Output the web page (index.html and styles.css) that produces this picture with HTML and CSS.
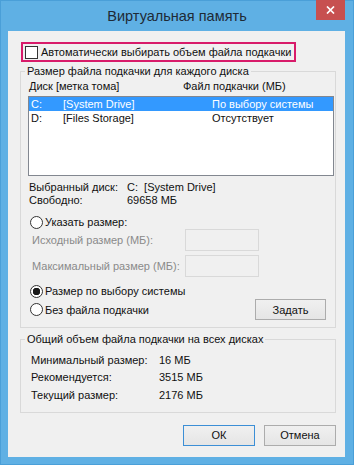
FILE: index.html
```html
<!DOCTYPE html>
<html lang="ru">
<head>
    <meta charset="UTF-8">
    <title>Виртуальная память</title>
    <link rel="stylesheet" href="styles.css">
</head>
<body>
<div class="window">
    <div class="titlebar">
        <span></span>
        <h1 class="title">Виртуальная память</h1>
        <button class="close" type="button">
            <svg width="9" height="8" viewBox="0 0 9 8"><path d="M1 0.5 L8 7.5 M8 0.5 L1 7.5" stroke="#fff" stroke-width="1.7" fill="none"/></svg>
        </button>
    </div>
    <div class="client">
        <label class="auto-box"><span class="checkbox"></span>Автоматически выбирать объем файла подкачки</label>

        <fieldset class="group">
            <legend>Размер файла подкачки для каждого диска</legend>
            <div class="list-head">
                <span>Диск [метка тома]</span>
                <span>Файл подкачки (МБ)</span>
            </div>
            <div class="listbox">
                <div class="list-row selected"><span>C:</span><span>[System Drive]</span><span>По выбору системы</span></div>
                <div class="list-row"><span>D:</span><span>[Files Storage]</span><span>Отсутствует</span></div>
            </div>
            <div class="info">
                <span>Выбранный диск:</span><span>C:&nbsp;&nbsp;[System Drive]</span>
                <span>Свободно:</span><span>69658 МБ</span>
            </div>
            <div class="radio-row first"><span class="radio"></span>Указать размер:</div>
            <div class="size-row"><span>Исходный размер (МБ):</span><span class="field"></span></div>
            <div class="size-row second"><span>Максимальный размер (МБ):</span><span class="field"></span></div>
            <div class="radio-row system"><span class="radio checked"></span>Размер по выбору системы</div>
            <div class="button-row">
                <div class="radio-row"><span class="radio"></span>Без файла подкачки</div>
                <button class="btn" type="button">Задать</button>
            </div>
        </fieldset>

        <fieldset class="group totals-group">
            <legend>Общий объем файла подкачки на всех дисках</legend>
            <div class="totals">
                <span>Минимальный размер:</span><span>16 МБ</span>
                <span>Рекомендуется:</span><span>3515 МБ</span>
                <span>Текущий размер:</span><span>2176 МБ</span>
            </div>
        </fieldset>

        <div class="dialog-buttons">
            <button class="btn default" type="button">ОК</button>
            <button class="btn" type="button">Отмена</button>
        </div>
    </div>
</div>
</body>
</html>
```

FILE: styles.css
```css
* {
    box-sizing: border-box;
}

body {
    margin: 0;
    background-color: #5fb0e4;
    font-family: "Liberation Sans", Arial, sans-serif;
    font-size: 11px;
    color: #111;
}

.window {
    height: 465px;
    display: flex;
    flex-direction: column;
    border: 1px solid #4a9fd8;
}

.titlebar {
    height: 30px;
    display: grid;
    grid-template-columns: 1fr auto 1fr;
    align-items: start;
}

.title {
    margin: 0;
    padding-top: 5px;
    font-size: 14.5px;
    font-weight: normal;
    line-height: 20px;
    color: #1e2a36;
}

.close {
    justify-self: end;
    width: 29px;
    height: 20px;
    margin-right: 8px;
    margin-top: -1px;
    padding: 0;
    border: none;
    background-color: #c75050;
    display: flex;
    align-items: center;
    justify-content: center;
}

.client {
    flex: 1;
    margin: 0 8px 7px 7px;
    background-color: #f0f0f0;
    display: flex;
    flex-direction: column;
}

.auto-box {
    margin: 11px 0 0 13px;
    width: 275px;
    height: 20px;
    border: 2px solid #d81b6a;
    display: flex;
    align-items: center;
    gap: 3px;
    padding-left: 2px;
}

.checkbox {
    width: 13px;
    height: 13px;
    border: 1px solid #333;
    background-color: #fff;
}

.group {
    margin: 2px 9px 0 12px;
    padding: 0 1px 7px 7px;
    border: 1px solid #d9d9d9;
    min-width: 0;
}

.group legend {
    padding: 0 2px;
    margin-left: -3px;
    line-height: 15px;
}

.list-head {
    display: grid;
    grid-template-columns: 154px 1fr;
    padding-left: 1px;
    line-height: 15px;
    margin-bottom: 2px;
}

.listbox {
    height: 80px;
    border: 1px solid #828790;
    background-color: #fff;
}

.list-row {
    height: 14px;
    line-height: 14px;
    display: grid;
    grid-template-columns: 32px 149px 1fr;
    padding-left: 2px;
}

.list-row.selected {
    background-color: #3399ff;
    color: #fff;
}

.info {
    margin-top: 5px;
    display: grid;
    grid-template-columns: 98px auto;
    line-height: 13px;
    padding-left: 1px;
}

.radio-row {
    display: flex;
    align-items: center;
    gap: 2px;
    padding-left: 2px;
    height: 14px;
}

.radio-row.first {
    margin-top: 8px;
}

.radio-row.system {
    margin-top: 7px;
}

.radio {
    width: 13px;
    height: 13px;
    border: 1px solid #333;
    border-radius: 50%;
    background-color: #fff;
}

.radio.checked {
    background: radial-gradient(circle, #1a1a1a 0 3.5px, #fff 4px);
}

.size-row {
    display: grid;
    grid-template-columns: 157px 74px;
    align-items: center;
    height: 22px;
    color: #8a8a8a;
}

.size-row span:first-child {
    padding-left: 4px;
}

.size-row.second {
    margin-top: 4px;
}

.field {
    height: 22px;
    border: 1px solid #d9d9d9;
    background-color: #f0f0f0;
}

.button-row {
    display: flex;
    justify-content: space-between;
    align-items: center;
    margin-top: 1px;
    padding-right: 8px;
}

.btn {
    width: 71px;
    height: 21px;
    padding: 0;
    border: 1px solid #acacac;
    background: linear-gradient(#f0f0f0, #e5e5e5);
    font-family: inherit;
    font-size: 11px;
    color: #111;
}

.btn.default {
    border-color: #3c8fd6;
}

.totals-group {
    margin-top: 4px;
    padding-bottom: 8px;
}

.totals {
    margin-top: 4px;
    display: grid;
    grid-template-columns: 128px auto;
    grid-auto-rows: 17.5px;
    align-items: center;
    padding-left: 3px;
}

.dialog-buttons {
    display: flex;
    justify-content: flex-end;
    gap: 9px;
    margin: 12px 9px 0 0;
}

.dialog-buttons .btn {
    width: 72px;
}
```
